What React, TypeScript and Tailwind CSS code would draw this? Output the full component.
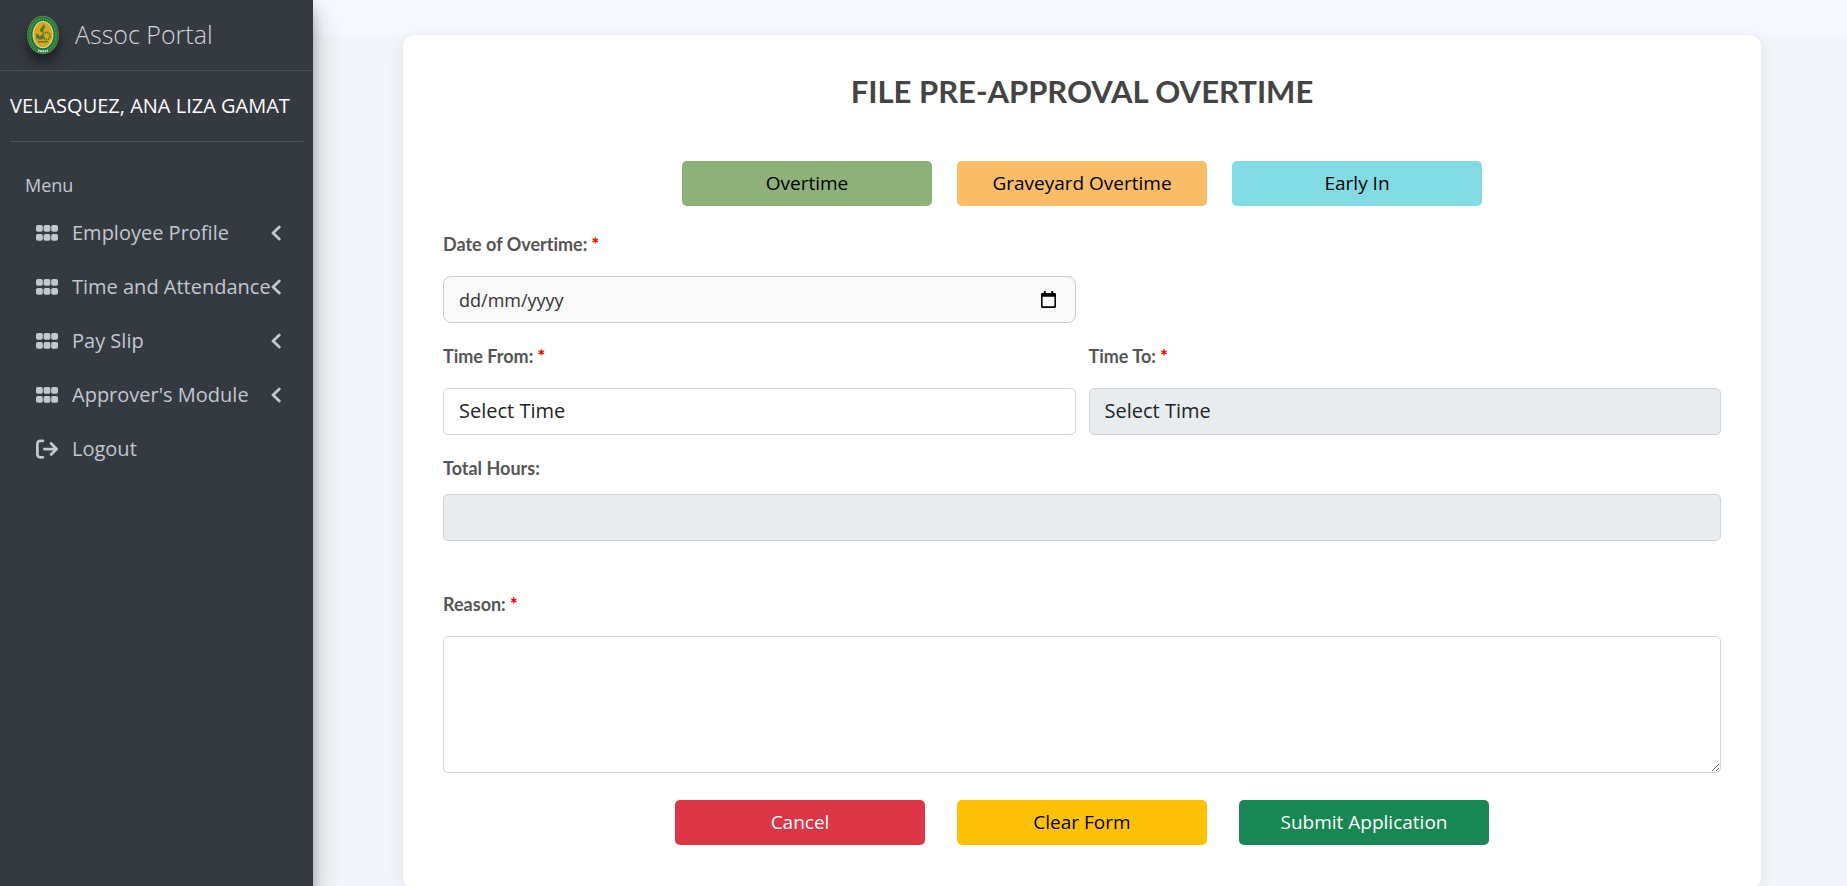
import type { ReactNode } from "react";
import { FaArrowRightFromBracket } from "react-icons/fa6";

const menu = ["Employee Profile", "Time and Attendance", "Pay Slip", "Approver's Module"];

function Seal() {
  return (
    <svg viewBox="0 0 32 40" className="h-10 w-8 shrink-0 drop-shadow-[0_8px_6px_rgba(0,0,0,0.5)]" aria-hidden="true">
      <ellipse cx="16" cy="20" rx="15.8" ry="19.3" fill="#6f8a3c" />
      <ellipse cx="16" cy="20" rx="15" ry="18.5" fill="#12774a" />
      <ellipse cx="16" cy="20" rx="12.9" ry="16.2" fill="none" stroke="#5d9a3c" strokeWidth="2" strokeDasharray="1.2 1" />
      <ellipse cx="16" cy="19.6" rx="10.4" ry="13.6" fill="#f0dc8c" />
      <ellipse cx="16" cy="19.6" rx="9.4" ry="12.6" fill="#dba51c" />
      <path d="M16 9c3 2 2 4 1 5-1 1 0 3-1 4-3-1-4-3-2-5 1-1 2-2 2-4z" fill="#4d7f30" />
      <circle cx="19.5" cy="21" r="3.6" fill="none" stroke="#4d7f30" strokeWidth="1.6" strokeDasharray="1.6 0.8" />
      <path d="M9 18l4 3 3-2 2 4-5 2-4-2zM10 26h12l-2 1.600h-8z" fill="#4d7f30" />
      <path d="M11 35.500q5 1.600 10 0" fill="none" stroke="#cfe3d2" strokeWidth="2" strokeDasharray="1.6 0.6" />
    </svg>
  );
}

function GridIcon() {
  return (
    <svg viewBox="0 0 22 16" className="h-4 w-[22px] shrink-0" fill="currentColor" aria-hidden="true">
      {[0, 9].map((y) => [0, 7.6, 15.2].map((x) => <rect key={`${x}-${y}`} x={x} y={y} width="6.8" height="6.8" rx="1.8" />))}
    </svg>
  );
}

function Chevron() {
  return (
    <svg viewBox="0 0 10 16" className="h-4 w-[10px] shrink-0" fill="none" stroke="currentColor" strokeWidth="2.8" strokeLinecap="round" strokeLinejoin="round" aria-hidden="true">
      <path d="M8.300 1.900L2 8l6.300 6.100" />
    </svg>
  );
}

function CalendarIcon() {
  return (
    <svg viewBox="0 0 16 18" className="h-[17px] w-[15px]" aria-hidden="true">
      <path d="M3 0h2v2h6V0h2v2h1.5A1.5 1.5 0 0 1 16 3.500V16.500A1.500 1.500 0 0 1 14.500 18H1.500A1.500 1.500 0 0 1 0 16.500V3.500A1.500 1.500 0 0 1 1.500 2H3zM1.700 6v10.300h12.600V6z" fill="#000" fillRule="evenodd" />
    </svg>
  );
}

function Label({ htmlFor, required, children }: { htmlFor: string; required?: boolean; children: ReactNode }) {
  return (
    <label htmlFor={htmlFor} className="block font-['Lato',sans-serif] text-lg leading-6 font-bold text-[#555] [font-variant-ligatures:none]">
      {children}
      {required && <span className="font-black text-[#f00]"> *</span>}
    </label>
  );
}

const field = "block h-[47px] w-full appearance-none rounded-[5px] border px-[15px] pb-[2px] text-xl outline-none";
const button = "h-[45px] w-[250px] rounded-[5px] pb-px text-[19px]";

export default function App() {
  return (
    <div className="flex h-screen overflow-hidden bg-[#f4f5fa] font-['Open_Sans',sans-serif]">
      <aside className="z-10 w-[313px] shrink-0 bg-[#353a41] text-[#c2c7d0] shadow-[0_14px_28px_rgba(0,0,0,0.25),0_10px_10px_rgba(0,0,0,0.22)]">
        <a href="#home" className="flex h-[71px] items-center gap-4 border-b border-[#4b5059] pb-px pl-[27px] text-[25px] font-light text-[#d2d4d6]">
          <Seal />
          Assoc Portal
        </a>
        <div className="px-[10px]">
          <p className="flex h-[71px] items-center border-b border-[#4f545d] text-xl font-medium whitespace-nowrap text-white">
            VELASQUEZ, ANA LIZA GAMAT
          </p>
        </div>
        <nav aria-label="Menu" className="pt-7">
          <h2 className="pl-[25px] text-lg leading-[30px]">Menu</h2>
          <ul className="pt-[6px]">
            {menu.map((name) => (
              <li key={name}>
                <a href="#menu" className="flex h-[54px] items-center gap-[14px] pr-8 pl-9 text-xl whitespace-nowrap">
                  <GridIcon />
                  <span className="w-0 flex-1">{name}</span>
                  <Chevron />
                </a>
              </li>
            ))}
            <li>
              <a href="#logout" className="flex h-[54px] items-center gap-[14px] pl-9 text-xl">
                <FaArrowRightFromBracket className="size-[22px] shrink-0" />
                Logout
              </a>
            </li>
          </ul>
        </nav>
      </aside>

      <main className="min-w-0 flex-1 overflow-y-auto [scrollbar-width:none]">
        <div className="h-[35px] bg-[#f5f8ff]" />
        <div className="pr-[86px] pb-10 pl-[90px]">
          <form className="rounded-xl bg-white px-10 pt-9 pb-11 shadow-[0_4px_20px_rgba(0,0,0,0.08)]">
            <h1 className="text-center font-['Lato',sans-serif] text-[31px] leading-10 font-bold text-[#444]">FILE PRE-APPROVAL OVERTIME</h1>

            <div className="mt-[50px] flex justify-center gap-[25px]">
              <button type="button" className={`${button} bg-[#8db178] text-black`}>Overtime</button>
              <button type="button" className={`${button} bg-[#f9bd68] text-black`}>Graveyard Overtime</button>
              <button type="button" className={`${button} bg-[#82dae3] text-black`}>Early In</button>
            </div>

            <div className="mt-[26px] grid grid-cols-2 gap-x-[13px] gap-y-[21px]">
              <div className="col-span-2 grid grid-cols-2 gap-x-[13px]">
                <div>
                  <Label htmlFor="date" required>Date of Overtime:</Label>
                  <div className="mt-5 flex h-[47px] items-center rounded-lg border border-[#ccc] bg-[#f9f9f9] pr-[19px] pl-[15px]">
                    <input id="date" type="text" placeholder="dd/mm/yyyy" className="min-w-0 flex-1 bg-transparent text-lg outline-none placeholder:text-[#333]" />
                    <button type="button" aria-label="Open calendar"><CalendarIcon /></button>
                  </div>
                </div>
              </div>
              <div>
                <Label htmlFor="from" required>Time From:</Label>
                <select id="from" className={`${field} mt-5 border-[#ced4da] bg-white text-[#212529]`}>
                  <option>Select Time</option>
                </select>
              </div>
              <div>
                <Label htmlFor="to" required>Time To:</Label>
                <select id="to" disabled className={`${field} mt-5 border-[#ced4da] bg-[#e9ecef] text-[#212529] opacity-100`}>
                  <option>Select Time</option>
                </select>
              </div>
              <div className="col-span-2">
                <Label htmlFor="hours">Total Hours:</Label>
                <input id="hours" type="text" readOnly className={`${field} mt-[14px] border-[#ced4da] bg-[#e9ecef]`} />
              </div>
            </div>

            <div className="mt-[51px]">
              <Label htmlFor="reason" required>Reason:</Label>
              <textarea id="reason" className="mt-5 block h-[137px] w-full resize rounded-[5px] border border-[#ced4da] bg-white px-[15px] py-2 text-xl outline-none" />
            </div>

            <div className="mt-[27px] flex justify-center gap-8">
              <button type="button" className={`${button} bg-[#dc3545] text-white`}>Cancel</button>
              <button type="reset" className={`${button} bg-[#ffc107] text-black`}>Clear Form</button>
              <button type="submit" className={`${button} bg-[#198754] text-white`}>Submit Application</button>
            </div>
          </form>
        </div>
      </main>
    </div>
  );
}
